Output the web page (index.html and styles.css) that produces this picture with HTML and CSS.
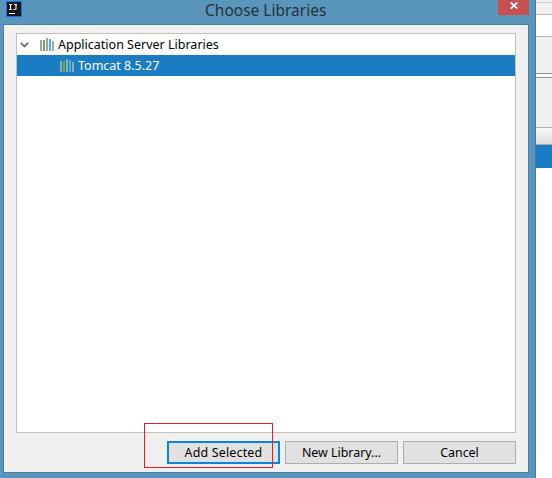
FILE: index.html
```html
<!DOCTYPE html>
<html lang="en">
<head>
<meta charset="utf-8">
<title>Choose Libraries</title>
<link rel="stylesheet" href="styles.css">
</head>
<body>
<svg width="0" height="0" class="defs"><defs>
<symbol id="library" viewBox="0 0 14 13">
<path class="bar-gray" d="M0 2h2v11H0zM6 0h2v13H6zM12 3h2v10h-2z"/>
<path class="bar-green" d="M3 2h2v11H3z"/>
<path class="bar-blue" d="M9 1h2v12H9z"/>
</symbol></defs></svg>
<main class="desktop">
<section class="dialog">
<header class="titlebar">
<svg class="logo" width="16" height="16" viewBox="0 0 16 16"><path fill="#176fe8" d="M0 0h16v16H0z"/><path fill="#17191c" d="M1 1h14v14H1z"/><path d="M3 3.500h3M4.500 3.500v5M3 8.500h3M8 3.500h3M10 3.500v4q0 1-1 1H7.500" fill="none" stroke="#f2f2f2" stroke-width="1.200"/><path fill="#fff" d="M3 12h6v1H3z"/></svg>
<h1 class="title">Choose Libraries</h1>
<div class="close"><svg width="8" height="7" viewBox="0 0 8 7"><path d="M.7.4l6.600 6.200M7.300.4L.7 6.600" stroke="#fff" stroke-width="1.800"/></svg></div>
</header>
<div class="content">
<div class="tree">
<div class="row"><svg class="chevron" width="9" height="6" viewBox="0 0 9 6"><path d="M.7.8l3.800 3.700L8.300.8" fill="none" stroke="#6e6e6e" stroke-width="1.800"/></svg><svg class="library" width="14" height="13"><use href="#library"/></svg><span class="group-label">Application Server Libraries</span></div>
<div class="row selected"><svg class="library" width="14" height="13"><use href="#library"/></svg><span class="item-label">Tomcat 8.5.27</span></div>
</div>
<footer class="actions">
<button class="button primary">Add Selected</button>
<button class="button">New Library...</button>
<button class="button">Cancel</button>
</footer>
</div>
</section>
<aside class="background">
<div class="bg-top"></div><div class="bg-bar"></div><div class="bg-field"></div><div class="bg-panel"></div><div class="bg-split"></div><div class="bg-tools"></div><div class="bg-head"></div><div class="bg-selected"></div>
</aside>
<div class="highlight"></div>
</main>
</body>
</html>
```
FILE: styles.css
```css
* { box-sizing: border-box; }
body { margin: 0; font: 12px/20px "Noto Sans", "Open Sans", sans-serif; color: #000; overflow: hidden; }
.defs { position: absolute; }
.desktop { position: relative; display: flex; width: 552px; height: 478px; overflow: hidden; background: #fff; }
.dialog { width: 536px; height: 478px; padding: 0 6px 5px 3px; background: #5a96bc; border-right: 1px solid #447ba0; display: flex; flex-direction: column; }
.titlebar { display: flex; height: 24px; padding-left: 3px; align-items: flex-start; }
.logo { margin-top: 1px; flex: none; }
.title { margin: 0; flex: 1; padding-left: 183px; font-size: 15.5px; line-height: 20px; font-weight: 400; color: #26313b; white-space: nowrap; }
.close { width: 31px; height: 15px; background: #c75050; display: flex; justify-content: center; padding-top: 2px; }
.content { height: 449px; border: 1px solid #4780a3; background: #f0f0f0; padding: 8px 12px; }
.tree { height: 400px; border: 1px solid #bfbfbf; background: #fff; }
.row { display: flex; height: 21px; padding-left: 3px; font-size: 12.5px; line-height: 21px; white-space: nowrap; }
.chevron { margin: 8px 11px 0 0; flex: none; }
.library { margin: 4px 4px 0 0; flex: none; }
.selected { background: #1a7dc4; color: #fff; padding-left: 43px; }
.bar-gray { fill: #9aa7b0; }
.bar-green { fill: #62b543; }
.bar-blue { fill: #40b6e0; }
.actions { display: flex; gap: 5px; margin-top: 8px; justify-content: flex-end; }
.button { width: 113px; height: 23px; padding: 0; border: 1px solid #adadad; background: #e1e1e1; font: inherit; font-size: 12.4px; color: #000; line-height: 20px; white-space: nowrap; }
.primary { border: 2px solid #0a84e0; line-height: 18px; letter-spacing: .2px; }
.background { width: 16px; background: #fff; }
.bg-top { height: 3px; background: #f0f0f0; border-bottom: 1px solid #d0d0d0; }
.bg-bar { height: 12px; background: #f0f0f0; border-bottom: 1px solid #b8b8b8; }
.bg-field { height: 22px; border-bottom: 1px solid #b8b8b8; }
.bg-panel { height: 36px; background: #f0f0f0; }
.bg-split { height: 5px; border: solid #929292; border-width: 1px 0; }
.bg-tools { height: 50px; background: #f0f0f0; border-bottom: 1px solid #b4b4b4; }
.bg-head { height: 17px; background: linear-gradient(#fbfbfb, #dcdcdc); border-bottom: 1px solid #a8a8a8; }
.bg-selected { height: 23px; background: #1a7dc4; }
.highlight { position: absolute; left: 144px; top: 423px; width: 129px; height: 45px; border: 1px solid #ed1c24; }
```
